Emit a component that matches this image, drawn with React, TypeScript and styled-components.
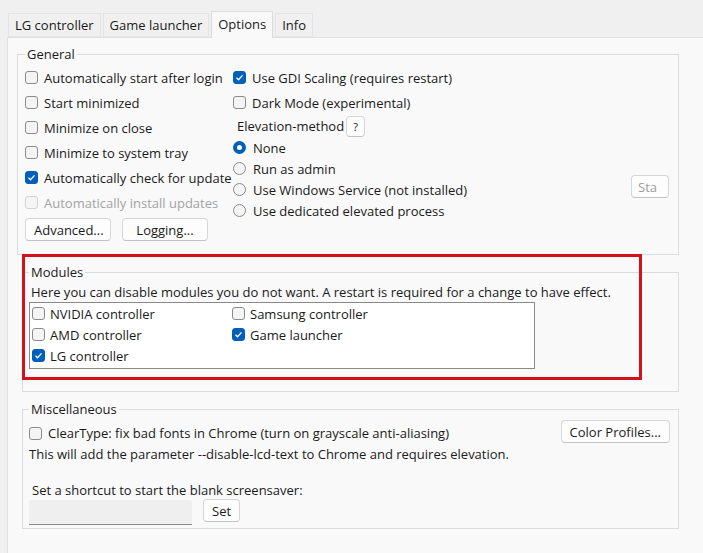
import React from 'react';
import styled, { createGlobalStyle } from 'styled-components';

const GlobalStyle = createGlobalStyle`
  html, body {
    margin: 0;
    padding: 0;
    background: #f0f0f0;
    overflow: hidden;
  }
  body {
    font-family: 'Open Sans', 'Noto Sans', sans-serif;
    font-size: 13px;
    color: #1a1a1a;
  }
`;

const Page = styled.div`
  position: relative;
  width: 703px;
  height: 553px;
  box-sizing: border-box;
  padding: 11px 0 0 7px;
  display: flex;
  flex-direction: column;
`;

const TabStrip = styled.div`
  display: flex;
  align-items: flex-end;
  gap: 2px;
  padding-left: 1px;
  height: 26px;
  position: relative;
  z-index: 1;
`;

const Tab = styled.div<{ $active?: boolean }>`
  display: flex;
  align-items: center;
  box-sizing: border-box;
  height: ${(p) => (p.$active ? '27px' : '24px')};
  padding: 0 6px;
  margin-bottom: ${(p) => (p.$active ? '-1px' : '0')};
  background: ${(p) => (p.$active ? '#f9f9f9' : '#f0f0f0')};
  border: 1px solid ${(p) => (p.$active ? '#dcdcdc' : '#e4e4e4')};
  border-bottom: ${(p) => (p.$active ? 'none' : '1px solid #e4e4e4')};
  padding-bottom: ${(p) => (p.$active ? '2px' : '0')};
  white-space: nowrap;
`;

const Panel = styled.div`
  flex: 1;
  background: #f9f9f9;
  border-top: 1px solid #e0e0e0;
  border-left: 1px solid #e0e0e0;
  padding: 7px 0 0 9px;
`;

const Group = styled.fieldset<{ $indent?: number; $height: number; $width: number }>`
  margin: 0 0 0 ${(p) => p.$indent ?? 0}px;
  padding: 2px 0 0 ${(p) => (p.$indent ? 6 : 7)}px;
  width: ${(p) => p.$width}px;
  height: ${(p) => p.$height}px;
  box-sizing: border-box;
  border: 1px solid #dcdcdc;
  border-radius: 0;
  min-width: 0;
  & + & {
    margin-top: 8px;
  }
`;

const Legend = styled.legend`
  padding: 0 2px;
  line-height: 18px;
`;

const GeneralGrid = styled.div`
  display: flex;
`;

const LeftColumn = styled.div`
  width: 208px;
  display: flex;
  flex-direction: column;
`;

const RightColumn = styled.div`
  display: flex;
  flex-direction: column;
`;

const CheckRow = styled.label<{ $height?: number; $disabled?: boolean }>`
  display: flex;
  align-items: center;
  height: ${(p) => p.$height ?? 25}px;
  white-space: nowrap;
  color: ${(p) => (p.$disabled ? '#a3a3a3' : 'inherit')};
`;

const Box = styled.span<{ $checked?: boolean; $disabled?: boolean; $gap?: number }>`
  flex: none;
  width: 13px;
  height: 13px;
  box-sizing: border-box;
  margin-right: ${(p) => p.$gap ?? 6}px;
  border-radius: 3px;
  border: 1px solid ${(p) => (p.$checked ? '#005fb8' : p.$disabled ? '#d2d2d2' : '#8b8b8b')};
  background: ${(p) => (p.$checked ? '#005fb8' : p.$disabled ? '#f5f5f5' : '#f4f4f4')};
  display: flex;
  align-items: center;
  justify-content: center;
`;

const RadioDot = styled.span<{ $checked?: boolean }>`
  flex: none;
  width: 13px;
  height: 13px;
  box-sizing: border-box;
  margin-right: 7px;
  border-radius: 50%;
  border: ${(p) => (p.$checked ? '4px solid #005fb8' : '1px solid #8b8b8b')};
  background: ${(p) => (p.$checked ? '#ffffff' : '#f4f4f4')};
`;

const ElevationRow = styled.div`
  display: flex;
  align-items: center;
  height: 22px;
  padding-left: 4px;
`;

const Button = styled.button<{ $width?: number; $disabled?: boolean }>`
  box-sizing: border-box;
  height: 23px;
  width: ${(p) => (p.$width ? `${p.$width}px` : 'auto')};
  padding: 0 8px;
  font: inherit;
  color: ${(p) => (p.$disabled ? '#9e9e9e' : '#1a1a1a')};
  background: #fdfdfd;
  border: 1px solid #d6d6d6;
  border-bottom-color: #c2c2c2;
  border-radius: 4px;
  white-space: nowrap;
  overflow: hidden;
`;

const HelpButton = styled(Button)`
  height: 21px;
  width: 19px;
  padding: 0;
  margin-left: 2px;
  font-size: 11px;
`;

const ButtonRow = styled.div`
  display: flex;
  gap: 11px;
  margin-top: 3px;
`;

const StartButton = styled(Button)`
  margin: 110px 9px 0 auto;
  padding: 0 6px;
  text-align: left;
`;

const Note = styled.div<{ $indent?: number; $top?: number }>`
  height: 18px;
  line-height: 18px;
  margin-top: ${(p) => p.$top ?? 0}px;
  padding-left: ${(p) => p.$indent ?? 0}px;
  white-space: nowrap;
`;

const ModuleList = styled.div`
  width: 506px;
  height: 67px;
  box-sizing: border-box;
  margin-top: 1px;
  padding: 0 0 0 2px;
  background: #ffffff;
  border: 1px solid #8a8a8a;
  display: grid;
  grid-template-columns: 200px 200px;
  grid-auto-rows: 21px;
`;

const MiscTop = styled.div`
  display: flex;
  align-items: flex-start;
  justify-content: space-between;
  padding-right: 8px;
`;

const ClearTypeRow = styled(CheckRow)`
  margin-top: 4px;
`;

const ShortcutRow = styled.div`
  display: flex;
  align-items: flex-start;
  gap: 11px;
`;

const ShortcutInput = styled.div`
  width: 163px;
  height: 25px;
  margin-top: 1px;
  box-sizing: border-box;
  background: #efefef;
  border-bottom: 1px solid #8a8a8a;
  border-radius: 3px 3px 0 0;
`;

const Highlight = styled.div`
  position: absolute;
  left: 22px;
  top: 254px;
  width: 620px;
  height: 126px;
  box-sizing: border-box;
  border: 3px solid #d3111b;
  pointer-events: none;
`;

function Check({ checked, disabled, gap }: { checked?: boolean; disabled?: boolean; gap?: number }) {
  return (
    <Box $checked={checked} $disabled={disabled} $gap={gap}>
      {checked && (
        <svg width="9" height="9" viewBox="0 0 9 9">
          <polyline points="1.5,4.8 3.5,6.8 7.5,2.4" fill="none" stroke="#fff" strokeWidth="1.3" />
        </svg>
      )}
    </Box>
  );
}

type Item = { label: string; checked?: boolean; disabled?: boolean };

const leftOptions: Item[] = [
  { label: 'Automatically start after login' },
  { label: 'Start minimized' },
  { label: 'Minimize on close' },
  { label: 'Minimize to system tray' },
  { label: 'Automatically check for update', checked: true },
  { label: 'Automatically install updates', disabled: true },
];

const elevation = [
  { label: 'None', checked: true },
  { label: 'Run as admin' },
  { label: 'Use Windows Service (not installed)' },
  { label: 'Use dedicated elevated process' },
];

const modules: Item[] = [
  { label: 'NVIDIA controller' },
  { label: 'Samsung controller' },
  { label: 'AMD controller' },
  { label: 'Game launcher', checked: true },
  { label: 'LG controller', checked: true },
];

export default function App() {
  return (
    <Page>
      <GlobalStyle />
      <TabStrip>
        <Tab>LG controller</Tab>
        <Tab>Game launcher</Tab>
        <Tab $active>Options</Tab>
        <Tab>Info</Tab>
      </TabStrip>
      <Panel>
        <Group $width={662} $height={210}>
          <Legend>General</Legend>
          <GeneralGrid>
            <LeftColumn>
              {leftOptions.map((o) => (
                <CheckRow key={o.label} $disabled={o.disabled}>
                  <Check checked={o.checked} disabled={o.disabled} />
                  {o.label}
                </CheckRow>
              ))}
              <ButtonRow>
                <Button $width={86}>Advanced...</Button>
                <Button $width={86}>Logging...</Button>
              </ButtonRow>
            </LeftColumn>
            <RightColumn>
              <CheckRow>
                <Check checked />
                Use GDI Scaling (requires restart)
              </CheckRow>
              <CheckRow>
                <Check />
                Dark Mode (experimental)
              </CheckRow>
              <ElevationRow>
                Elevation-method
                <HelpButton>?</HelpButton>
              </ElevationRow>
              {elevation.map((r) => (
                <CheckRow key={r.label} $height={21}>
                  <RadioDot $checked={r.checked} />
                  {r.label}
                </CheckRow>
              ))}
            </RightColumn>
            <StartButton $width={38} $disabled>
              Sta
            </StartButton>
          </GeneralGrid>
        </Group>

        <Group $indent={5} $width={657} $height={129}>
          <Legend>Modules</Legend>
          <Note $indent={2}>
            Here you can disable modules you do not want. A restart is required for a change to have effect.
          </Note>
          <ModuleList>
            {modules.map((m) => (
              <CheckRow key={m.label} $height={21}>
                <Check checked={m.checked} gap={5} />
                {m.label}
              </CheckRow>
            ))}
          </ModuleList>
        </Group>

        <Group $indent={5} $width={657} $height={129}>
          <Legend>Miscellaneous</Legend>
          <MiscTop>
            <ClearTypeRow $height={18}>
              <Check />
              ClearType: fix bad fonts in Chrome (turn on grayscale anti-aliasing)
            </ClearTypeRow>
            <Button>Color Profiles...</Button>
          </MiscTop>
          <Note $top={2}>This will add the parameter --disable-lcd-text to Chrome and requires elevation.</Note>
          <Note $indent={3} $top={18}>
            Set a shortcut to start the blank screensaver:
          </Note>
          <ShortcutRow>
            <ShortcutInput />
            <Button $width={37}>Set</Button>
          </ShortcutRow>
        </Group>
      </Panel>
      <Highlight />
    </Page>
  );
}
